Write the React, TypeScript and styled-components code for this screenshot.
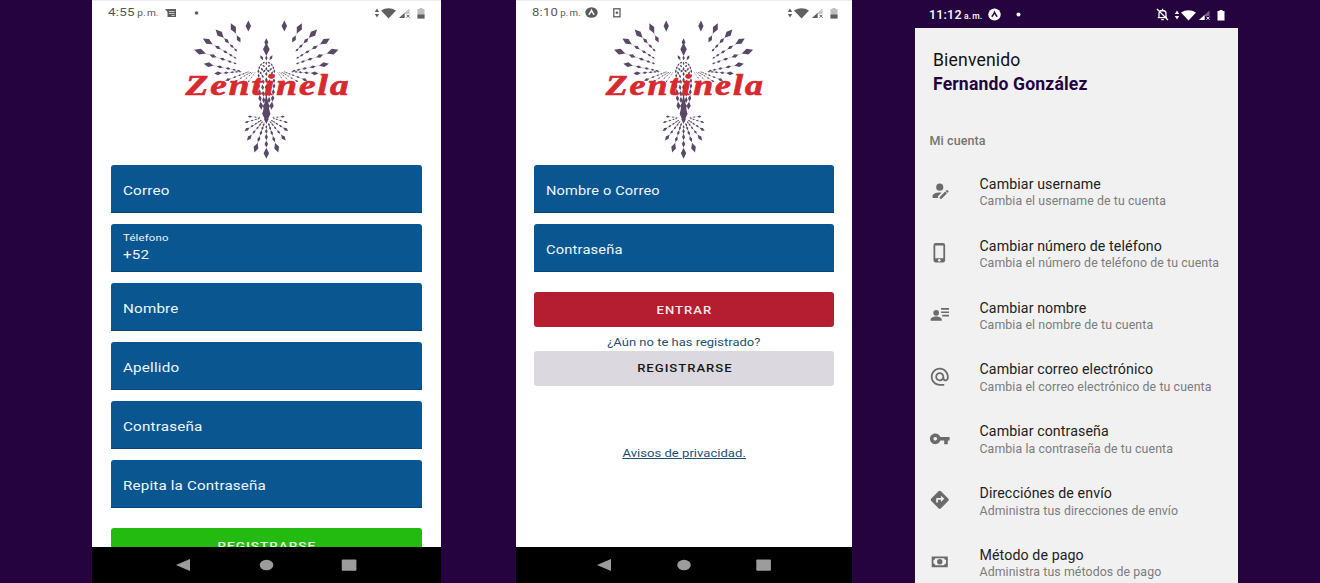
import React from 'react';
import styled, { createGlobalStyle } from 'styled-components';
import { MdAlternateEmail, MdDirections, MdPhoneIphone, MdVpnKey } from 'react-icons/md';

const GlobalStyle = createGlobalStyle`
  * { box-sizing: border-box; }
  body {
    margin: 0;
    background: #25033f;
    font-family: Roboto, "Liberation Sans", sans-serif;
    overflow: hidden;
  }
`;

const Showcase = styled.main`
  display: grid;
  grid-template-columns: 349px 336px 323px;
  column-gap: 75px;
  width: 1320px;
  height: 583px;
  padding-left: 92px;
  overflow: hidden;
`;

const Phone = styled.section<{ $bg?: string; $shift?: number }>`
  display: flex;
  flex-direction: column;
  height: 583px;
  min-width: 0;
  overflow: hidden;
  background: ${(p) => p.$bg ?? '#fff'};
  margin-left: ${(p) => p.$shift ?? 0}px;
  width: 100%;
`;

const StatusBar = styled.header<{ $dark?: boolean; $end?: number }>`
  display: flex;
  flex: none;
  justify-content: space-between;
  align-items: flex-start;
  height: ${(p) => (p.$dark ? 28 : 20)}px;
  padding: ${(p) => (p.$dark ? '6px' : '3px')} ${(p) => p.$end ?? 13}px 0 ${(p) => (p.$dark ? 14 : 15.5)}px;
  border-top: ${(p) => (p.$dark ? 'none' : '1px solid #ececf3')};
  background: ${(p) => (p.$dark ? '#25033f' : '#fff')};
  color: ${(p) => (p.$dark ? '#fff' : '#555')};
`;

const StatusGroup = styled.div`
  display: flex;
  align-items: center;
  height: 17px;
`;

const Stretch = styled.span<{ $x: number; $origin?: string }>`
  display: inline-block;
  white-space: nowrap;
  transform: scaleX(${(p) => p.$x});
  transform-origin: ${(p) => p.$origin ?? 'left'} center;
`;

const Clock = styled.div<{ $width: number; $dark?: boolean }>`
  width: ${(p) => p.$width}px;
  padding-top: ${(p) => (p.$dark ? 1 : 0)}px;
  font-size: ${(p) => (p.$dark ? 12.5 : 11.5)}px;
  font-weight: ${(p) => (p.$dark ? 500 : 400)};
  line-height: 17px;
  letter-spacing: 0.2px;
  word-spacing: -1px;
  white-space: nowrap;
  small { font-size: 8.6px; letter-spacing: 0; }
`;

const StatusIcon = styled.svg<{ $gap?: number }>`
  display: block;
  flex: none;
  margin-left: ${(p) => p.$gap ?? 0}px;
`;

const Brand = styled.svg`
  display: block;
  flex: none;
  width: 100%;
  height: 145px;
`;

const Form = styled.form<{ $side: number }>`
  display: flex;
  flex: 1;
  flex-direction: column;
  min-height: 0;
  overflow: hidden;
  padding: 0 ${(p) => p.$side}px;
`;

const Field = styled.div<{ $filled?: boolean }>`
  display: flex;
  flex: none;
  flex-direction: column;
  justify-content: center;
  height: 48px;
  margin-bottom: 11px;
  padding: ${(p) => (p.$filled ? 2 : 4)}px 12px 0;
  border-bottom: 1px solid #07457b;
  border-radius: 3px 3px 0 0;
  background: #0a5691;
  color: #eef6fb;
  font-size: 13px;
  line-height: 18px;
  letter-spacing: 0.15px;
`;

const FieldLabel = styled.span`
  margin-top: -3px;
  font-size: 9.7px;
  line-height: 16px;
`;

const Button = styled.div<{ $bg: string; $color: string; $top: number }>`
  display: flex;
  flex: none;
  align-items: center;
  justify-content: center;
  height: 35px;
  margin-top: ${(p) => p.$top}px;
  padding-left: 1.5px;
  border-radius: 3px;
  background: ${(p) => p.$bg};
  color: ${(p) => p.$color};
  font-size: 11.5px;
  font-weight: 500;
  letter-spacing: 0.85px;
`;

const Hint = styled.div`
  height: 15px;
  margin-top: 8px;
  color: #1d5075;
  font-size: 11.5px;
  line-height: 15px;
  text-align: center;
`;

const PrivacyLink = styled(Hint)`
  margin-top: 60px;
  span { text-decoration: underline; }
`;

const NavBar = styled.nav`
  display: flex;
  flex: none;
  align-items: center;
  justify-content: center;
  height: 36px;
  background: #000;
`;

const Welcome = styled.div`
  height: 98px;
  flex: none;
  padding: 21px 18px 0;
  color: #111;
  font-size: 17.6px;
  line-height: 23.5px;
  letter-spacing: 0.15px;
  strong { display: block; color: #25033f; font-weight: 700; }
`;

const SectionTitle = styled.h2`
  flex: none;
  height: 34px;
  margin: 0;
  padding: 6px 14.5px 0;
  color: #757575;
  font-size: 12.5px;
  font-weight: 500;
  line-height: 18px;
  letter-spacing: 0.1px;
`;

const Row = styled.div`
  display: grid;
  flex: none;
  grid-template-columns: 50.5px 1fr;
  align-items: center;
  height: 61.85px;
  padding-left: 14px;
  color: #222;
  font-size: 14.2px;
  white-space: nowrap;
  svg { display: block; color: #6b6b6b; }
`;

const RowText = styled.div`
  padding-top: 5px;
  line-height: 17.5px;
  letter-spacing: 0.1px;
  small { display: block; color: #7c7c7c; font-size: 12.33px; }
`;

type Ray = [number, number, number, number, number, number, number];

/* from x, from y, to x, to y, outer length, inner length, diamond count */
const RAYS: Ray[] = [
  [235, 78, 235, 79, 33, 33, 1],
  [190, 85, 206, 117, 34, 24, 2],
  [149, 101, 197, 150, 35, 13, 4],
  [113, 124, 195, 173, 34, 11, 5],
  [90, 155, 195, 190, 37, 11, 5],
  [116, 194, 206, 212, 30, 10, 5],
  [144, 220, 210, 215, 23, 9, 5],
  [174, 239, 234, 216, 17, 6, 6],
  [198, 243, 242, 217, 12, 5, 6],
  [218, 245, 249, 217, 9, 4, 5],
  [236, 244, 255, 218, 8, 4, 4],
  [258, 443, 281, 374, 30, 12, 5],
  [238, 413, 276, 367, 22, 9, 5],
  [231, 388, 272, 362, 18, 8, 5],
  [231, 366, 266, 356, 14, 7, 4],
  [240, 350, 268, 352, 13, 6, 3],
  [275, 173, 279, 180, 17, 17, 1],
];

/* Feathers of the left half of the body: x, y, length, tilt in degrees */
const FEATHERS: [number, number, number, number][] = [
  [281, 188, 10, 150], [273, 194, 10, 125], [268, 203, 11, 105], [265, 214, 12, 90],
  [281, 198, 10, 40], [276, 208, 12, 55], [272, 219, 12, 60], [283, 213, 12, 130],
  [266, 227, 13, 88], [278, 229, 13, 70], [266, 242, 15, 88], [280, 245, 15, 75],
  [266, 258, 17, 86], [278, 262, 17, 84], [268, 276, 18, 84], [280, 281, 18, 82],
  [270, 295, 20, 82], [281, 300, 19, 88], [273, 317, 25, 84], [283, 319, 18, 90],
];

function diamond(x: number, y: number, length: number, angle: number) {
  const half = length / 2;
  const wide = length * 0.25;
  const dx = Math.cos(angle);
  const dy = Math.sin(angle);
  return `M${x + dx * half} ${y + dy * half}L${x - dy * wide} ${y + dx * wide}L${x - dx * half} ${y - dy * half}L${x + dy * wide} ${y - dx * wide}Z`;
}

function rayPath([x1, y1, x2, y2, outer, inner, count]: Ray) {
  const angle = Math.atan2(y2 - y1, x2 - x1);
  let path = '';
  for (let i = 0; i < count; i += 1) {
    const t = count === 1 ? 0 : (1 - 0.74 ** i) / (1 - 0.74 ** (count - 1));
    const size = i === 0 ? outer : inner + (outer * 0.76 - inner) * (1 - t);
    path += diamond(x1 + (x2 - x1) * t, y1 + (y2 - y1) * t, size, angle);
  }
  return path;
}

const HALF = RAYS.map(rayPath).join('')
  + FEATHERS.map(([x, y, size, tilt]) => diamond(x, y, size, (tilt * Math.PI) / 180)).join('');
const STEMS = RAYS.filter((r) => r[6] > 1).map((r) => `M${r[0]} ${r[1]}L${r[2]} ${r[3]}`).join('');
const SPINE = ([
  [127, 24], [148, 40], [174, 15], [190, 11], [206, 12], [222, 14], [240, 16], [262, 18],
  [284, 16], [304, 18], [341, 50], [358, 28], [381, 12], [394, 16], [411, 19], [432, 21], [460, 33],
] as [number, number][]).map(([y, size]) => diamond(289, y, size, Math.PI / 2)).join('');

function Hummingbird() {
  const mirror = 'translate(578 0) scale(-1 1)';
  return (
    <g fill="#5b4869">
      <path d={STEMS} stroke="#a79bb0" strokeWidth="1.2" />
      <path d={STEMS} stroke="#a79bb0" strokeWidth="1.2" transform={mirror} />
      <path d={HALF} />
      <path d={HALF} transform={mirror} />
      <path d={SPINE} />
      <path d="M289 280L300 340L289 368L278 340Z" />
    </g>
  );
}

function Logo({ width, offset, squeeze }: { width: number; offset: number; squeeze: number }) {
  return (
    <Brand viewBox={`0 20 ${width} 145`} preserveAspectRatio="none">
      <g transform={`translate(${offset} 0) scale(${squeeze} 1)`}>
        <g transform="scale(0.33333)"><Hummingbird /></g>
        <text
          x="12.4"
          y="94.6"
          transform="scale(1.25 1)"
          textLength="130.5"
          fontFamily="Liberation Serif, serif"
          fontWeight="700"
          fontStyle="italic"
          fontSize="29.8"
          fill="#d8292f"
          stroke="#d8292f"
          strokeWidth="0.7"
        >
          Zentinela
        </text>
      </g>
    </Brand>
  );
}

function Signals({ dark }: { dark?: boolean }) {
  const main = dark ? '#fff' : '#5f5f5f';
  const faint = dark ? '#75607f' : '#c4c4c4';
  return (
    <StatusIcon width="54" height="14" viewBox="0 0 54 14">
      <path d="M0.8 6L3 2.5L5.2 6ZM0.8 8L3 11.5L5.2 8Z" fill={main} />
      <path d="M7 4.6Q14.5 -0.2 22 4.6L14.5 12.5Z" fill={main} />
      <path d="M25 12L35.5 2.5V8H31V12Z" fill={faint} />
      <path d="M25 12L30.5 7V12Z" fill={main} />
      <path d="M32.5 8.7L35.5 11.7M35.5 8.7L32.5 11.7" stroke={main} strokeWidth="1" />
      <path d="M43.5 3H45.5V2H48.5V3H50.5V12.5H43.5Z" fill={dark ? '#fff' : '#bdbdbd'} />
      {!dark && <path d="M43.5 8.5H50.5V12.5H43.5Z" fill={main} />}
    </StatusIcon>
  );
}

function AppBadge({ dark }: { dark?: boolean }) {
  return (
    <StatusIcon width="13" height="13" viewBox="0 0 13 13">
      <ellipse cx="6.5" cy="6.5" rx="6.2" ry={dark ? 6 : 5.2} fill={dark ? '#fff' : '#5c5c5c'} />
      <path d="M3.8 8.8Q5.6 6.5 6.5 4.4Q7.4 6.5 9.2 8.8" fill="none" stroke={dark ? '#25033f' : '#fff'} strokeWidth="1.4" />
    </StatusIcon>
  );
}

function Navigation({ spread }: { spread: [number, number, number] }) {
  const [back, home, recent] = spread;
  return (
    <NavBar>
      <svg width="100%" height="36" fill="#9c9c9c">
        <path d={`M${back - 7} 18L${back + 7} 12V24Z`} />
        <ellipse cx={home} cy="18" rx="6.8" ry="5.3" />
        <rect x={recent - 7.2} y="12.5" width="14.6" height="11.2" rx="0.8" />
      </svg>
    </NavBar>
  );
}

const ICON = 21.5;

const UserEdit = () => (
  <svg width={ICON} height={ICON} viewBox="0 0 24 24" fill="currentColor">
    <path d="M21.7 13.35L20.7 14.35L18.65 12.3L19.65 11.3C19.86 11.09 20.21 11.09 20.42 11.3L21.7 12.58C21.91 12.79 21.91 13.14 21.7 13.35M12 18.94L18.06 12.88L20.11 14.93L14.06 21H12V18.94M12 14C7.58 14 4 15.79 4 18V20H10V18.11L14 14.11C13.34 14.03 12.67 14 12 14M12 4A4 4 0 0 0 8 8A4 4 0 0 0 12 12A4 4 0 0 0 16 8A4 4 0 0 0 12 4Z" />
  </svg>
);

const UserDetails = () => (
  <svg width={ICON} height={ICON} viewBox="0 0 24 24" fill="currentColor">
    <circle cx="8" cy="9.8" r="3.2" />
    <path d="M1.8 18.7V17.4C1.8 15.2 5.2 14 8 14S14.2 15.2 14.2 17.4V18.7ZM13.5 4.5H22.3V6.3H13.5ZM13.5 8.3H22.3V10.1H13.5ZM14.8 12.1H22.3V13.9H14.8Z" />
  </svg>
);

const Cash = () => (
  <svg width={ICON} height={ICON} viewBox="0 0 24 24" fill="currentColor">
    <path fillRule="evenodd" d="M3 6H21V18H3V6M12 9A3 3 0 0 1 15 12A3 3 0 0 1 12 15A3 3 0 0 1 9 12A3 3 0 0 1 12 9M7 8A2 2 0 0 1 5 10V14A2 2 0 0 1 7 16H17A2 2 0 0 1 19 14V10A2 2 0 0 1 17 8H7Z" />
  </svg>
);

const ACCOUNT_ROWS = [
  { icon: <UserEdit />, title: 'Cambiar username', note: 'Cambia el username de tu cuenta' },
  { icon: <MdPhoneIphone size={ICON} />, title: 'Cambiar número de teléfono', note: 'Cambia el número de teléfono de tu cuenta' },
  { icon: <UserDetails />, title: 'Cambiar nombre', note: 'Cambia el nombre de tu cuenta' },
  { icon: <MdAlternateEmail size={ICON} />, title: 'Cambiar correo electrónico', note: 'Cambia el correo electrónico de tu cuenta' },
  { icon: <MdVpnKey size={ICON} />, title: 'Cambiar contraseña', note: 'Cambia la contraseña de tu cuenta' },
  { icon: <MdDirections size={ICON} />, title: 'Direcciónes de envío', note: 'Administra tus direcciones de envío' },
  { icon: <Cash />, title: 'Método de pago', note: 'Administra tus métodos de pago' },
];

export default function App() {
  return (
    <>
      <GlobalStyle />
      <Showcase>
        <Phone>
          <StatusBar>
            <StatusGroup>
              <Clock $width={57.5}><Stretch $x={1.17}>4:55 <small>p. m.</small></Stretch></Clock>
              <StatusIcon width="40" height="12" viewBox="0 0 40 12">
                <path d="M0 2H11V10H2.5V5Z" fill="#5c5c5c" />
                <path d="M4 4.5H9.5M4 6.5H9.5M6.5 8.5H9.5" stroke="#e2e2e2" strokeWidth="0.8" />
                <circle cx="31.5" cy="6" r="1.8" fill="#5c5c5c" />
              </StatusIcon>
            </StatusGroup>
            <StatusGroup><Signals /></StatusGroup>
          </StatusBar>
          <Logo width={349} offset={78} squeeze={1} />
          <Form $side={19}>
            <Field><Stretch $x={1.17}>Correo</Stretch></Field>
            <Field $filled>
              <FieldLabel><Stretch $x={1.17}>Télefono</Stretch></FieldLabel>
              <Stretch $x={1.17}>+52</Stretch>
            </Field>
            <Field><Stretch $x={1.17}>Nombre</Stretch></Field>
            <Field><Stretch $x={1.17}>Apellido</Stretch></Field>
            <Field><Stretch $x={1.17}>Contraseña</Stretch></Field>
            <Field><Stretch $x={1.165}>Repita la Contraseña</Stretch></Field>
            <Button $bg="#23bb0f" $color="#e9f9e6" $top={9}>
              <Stretch $x={1.18} $origin="center">REGISTRARSE</Stretch>
            </Button>
          </Form>
          <Navigation spread={[91, 174.5, 257]} />
        </Phone>

        <Phone>
          <StatusBar $end={11}>
            <StatusGroup>
              <Clock $width={53.5}><Stretch $x={1.13}>8:10 <small>p. m.</small></Stretch></Clock>
              <AppBadge />
              <StatusIcon $gap={15} width="8" height="10" viewBox="0 0 8 10">
                <rect x="0.8" y="0.8" width="6.2" height="8" fill="none" stroke="#5c5c5c" strokeWidth="1.3" />
                <circle cx="3.9" cy="4.8" r="1.3" fill="#5c5c5c" />
              </StatusIcon>
            </StatusGroup>
            <StatusGroup><Signals /></StatusGroup>
          </StatusBar>
          <Logo width={336} offset={74.8} squeeze={0.963} />
          <Form $side={18.4}>
            <Field><Stretch $x={1.12}>Nombre o Correo</Stretch></Field>
            <Field><Stretch $x={1.13}>Contraseña</Stretch></Field>
            <Button $bg="#b41e30" $color="#fbe9ec" $top={9}>
              <Stretch $x={1.14} $origin="center">ENTRAR</Stretch>
            </Button>
            <Hint><Stretch $x={1.13} $origin="center">¿Aún no te has registrado?</Stretch></Hint>
            <Button $bg="#dbd9df" $color="#161616" $top={0.6}>
              <Stretch $x={1.14} $origin="center">REGISTRARSE</Stretch>
            </Button>
            <PrivacyLink><Stretch $x={1.14} $origin="center">Avisos de privacidad.</Stretch></PrivacyLink>
          </Form>
          <Navigation spread={[88, 168, 247.5]} />
        </Phone>

        <Phone $bg="#f1f1f1" $shift={-12}>
          <StatusBar $dark $end={10.5}>
            <StatusGroup>
              <Clock $width={59} $dark>11:12 <small>a. m.</small></Clock>
              <AppBadge dark />
              <StatusIcon $gap={15} width="5" height="5" viewBox="0 0 5 5"><circle cx="2.5" cy="2.5" r="2" fill="#fff" /></StatusIcon>
            </StatusGroup>
            <StatusGroup>
              <StatusIcon width="13" height="13" viewBox="0 0 13 13" fill="none" stroke="#fff" strokeWidth="1.3">
                <path d="M3 9.5V5.5Q3 2.8 6.5 2.5Q10 2.8 10 5.5V9.5M1.8 9.7H11M6.5 0.8V2.5M5.3 11.6H7.7M1 1L12 12" />
              </StatusIcon>
              <StatusIcon as="div" $gap={5}><Signals dark /></StatusIcon>
            </StatusGroup>
          </StatusBar>
          <Welcome>Bienvenido<strong>Fernando González</strong></Welcome>
          <SectionTitle>Mi cuenta</SectionTitle>
          {ACCOUNT_ROWS.map((row) => (
            <Row key={row.title}>
              {row.icon}
              <RowText>{row.title}<small>{row.note}</small></RowText>
            </Row>
          ))}
        </Phone>
      </Showcase>
    </>
  );
}
